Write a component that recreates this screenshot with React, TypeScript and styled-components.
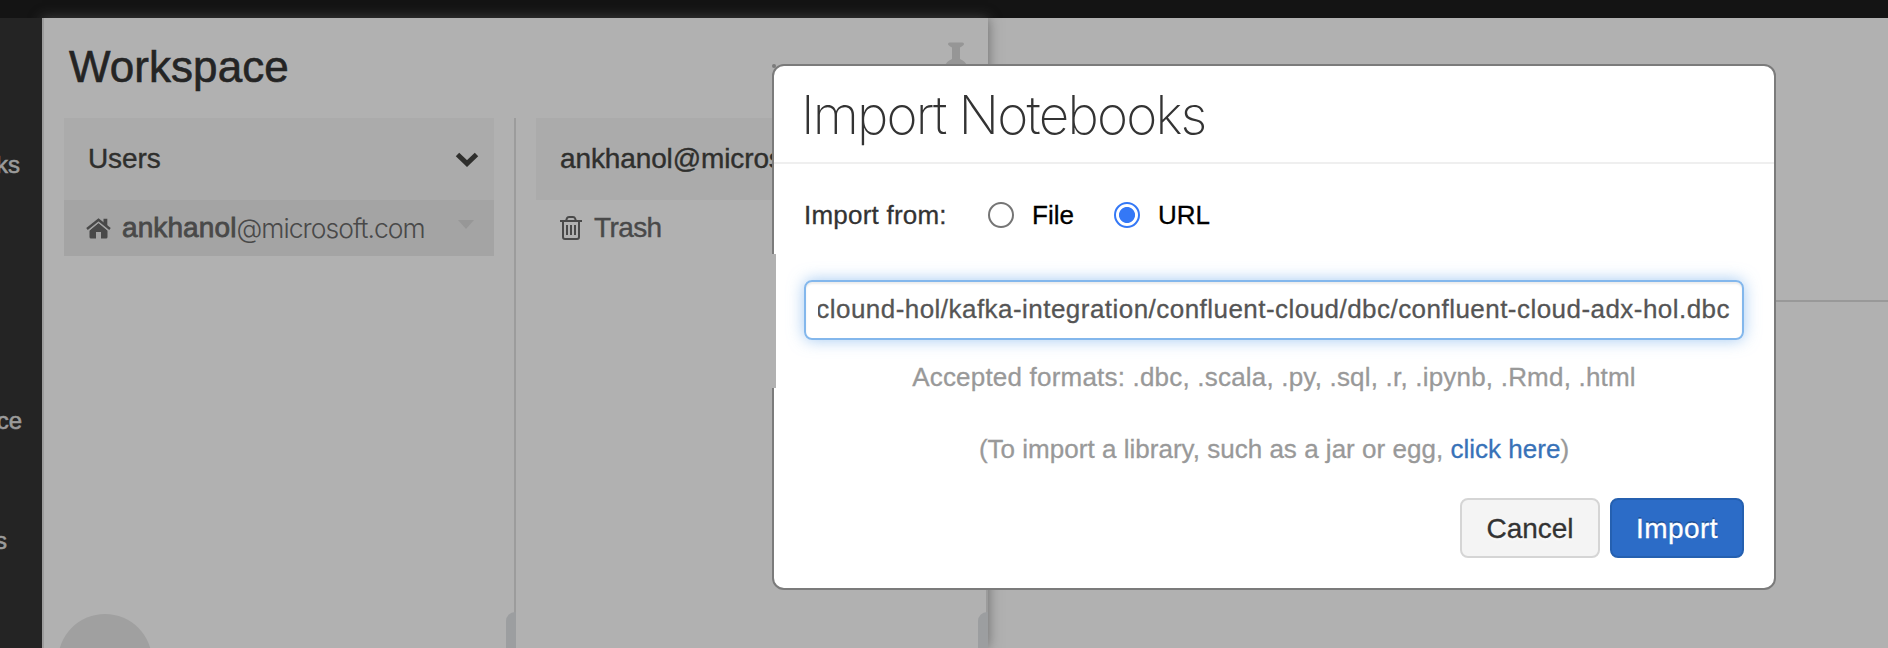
import React from "react";
import styled, { createGlobalStyle } from "styled-components";

const Global = createGlobalStyle`
  * { box-sizing: border-box; }
  html, body { margin: 0; padding: 0; }
  body {
    width: 1888px; height: 648px; overflow: hidden; background: #b1b1b1;
    font-family: "Liberation Sans", Arial, sans-serif; color: #333;
  }
`;

const Page = styled.div`
  position: relative; width: 1888px; height: 648px; overflow: hidden;
  display: flex; flex-direction: column;
`;
const TopBar = styled.header`height: 18px; flex: none; background: #141414;`;
const Body = styled.div`flex: 1; display: flex; min-height: 0;`;

const Sidebar = styled.nav`
  width: 42px; flex: none; background: #242424; color: #9b9b9b;
  display: flex; flex-direction: column; padding-top: 133px;
  position: relative; z-index: 2;
`;
const SideLabel = styled.span<{ $end: number; $gap: number }>`
  height: 28px; line-height: 28px; font-size: 24px; width: ${p => p.$end}px;
  margin-bottom: ${p => p.$gap}px; overflow: hidden;
  display: flex; justify-content: flex-end; -webkit-text-stroke: 0.6px;
`;

const Panel = styled.section`
  width: 946px; flex: none; background: #b1b1b1; border-left: 2px solid #9c9c9c;
  box-shadow: 0 0 12px rgba(80, 80, 80, 0.75);
  display: flex; flex-direction: column; position: relative; z-index: 1;
`;
const PanelHead = styled.div`
  height: 100px; flex: none; display: flex; justify-content: space-between;
  padding: 24px 20px 0 25px;
`;
const PanelTitle = styled.h1`
  margin: 0; font-size: 44px; line-height: 50px; font-weight: 400; color: #242424;
  letter-spacing: 0.05px; -webkit-text-stroke: 0.6px;
`;
const Columns = styled.div`flex: 1; display: flex; padding-left: 20px;`;
const Column = styled.div<{ $width: number; $pad: number; $line?: boolean }>`
  width: ${p => p.$width}px; padding-right: ${p => p.$pad}px; position: relative;
  margin-right: ${p => (p.$line ? 20 : 0)}px; border-right: 2px solid #9c9c9c;
`;
const ColumnHead = styled.div`
  height: 82px; background: #ababab; padding: 0 15px 1px 24px;
  display: flex; align-items: center; justify-content: space-between;
  font-size: 28px; color: #2f2f2d; letter-spacing: -0.12px; -webkit-text-stroke: 0.4px;
`;
const Row = styled.div<{ $selected?: boolean }>`
  height: 56px; padding: 0 20px 0 ${p => (p.$selected ? 22 : 24)}px;
  display: flex; align-items: center;
  background: ${p => (p.$selected ? "#a4a4a4" : "transparent")};
  font-size: 28px; color: #494949;
`;
const RowText = styled.span<{ $gap: number; $bold?: boolean }>`
  margin-left: ${p => p.$gap}px;
  -webkit-text-stroke: ${p => (p.$bold ? 0.8 : 0.4)}px;
  letter-spacing: ${p => (p.$bold ? 0.1 : -0.6)}px;
`;
const Domain = styled.span`
  font-family: Inter, sans-serif; font-weight: 300; font-size: 26.5px;
  letter-spacing: -0.95px; flex: 1;
`;
const Grip = styled.div`
  position: absolute; right: -2px; bottom: 0; width: 10px; height: 36px;
  background: #9c9ea0; border-radius: 9px 0 0 0;
`;
const Bubble = styled.div`
  position: absolute; left: 14px; top: 596px; width: 94px; height: 94px;
  border-radius: 50%; background: #a0a0a0;
`;

const Content = styled.main`flex: 1; padding-top: 282px;`;
const Rule = styled.div`height: 2px; background: #999;`;

const Dialog = styled.div`
  position: absolute; left: 772px; top: 64px; width: 1004px; height: 526px; z-index: 5;
  background: #fff; border: 2px solid #7b7b7b; border-radius: 12px;
`;
const DialogHead = styled.div`
  height: 98px; border-bottom: 2px solid #efefef; padding: 17px 0 0 27px;
`;
const DialogTitle = styled.h2`
  margin: 0; font-family: Inter, sans-serif; font-weight: 200; font-size: 53px;
  line-height: 64px; letter-spacing: -1.8px; color: #333; white-space: nowrap;
`;
const EdgeGap = styled.div`
  position: absolute; left: -2px; top: 188px; width: 4px; height: 134px; background: #b1b1b1;
`;
const CornerHandle = styled.div`
  position: absolute; left: -2px; top: -2px; width: 4px; height: 4px;
  border-radius: 50%; background: #7b7b7b;
`;
const DialogBody = styled.div`padding: 0 30px; font-size: 26px; -webkit-text-stroke: 0.3px;`;
const Options = styled.div`
  height: 102px; display: flex; align-items: center; color: #333;
`;
const Legend = styled.span`width: 184px; letter-spacing: 0.22px;`;
const Option = styled.label<{ $width: number }>`
  width: ${p => p.$width}px; display: flex; align-items: center; gap: 18px; color: #000;
`;
const Radio = styled.span<{ $on?: boolean }>`
  width: 26px; height: 26px; border-radius: 50%; flex: none;
  border: 2px solid ${p => (p.$on ? "#3478f6" : "#757575")};
  background: ${p => (p.$on ? "radial-gradient(circle, #3478f6 7.6px, #fff 8.4px)" : "#fff")};
`;
const UrlField = styled.div`
  margin-top: 14px; height: 60px; border: 2px solid #83b7ec; border-radius: 8px;
  padding: 0 12px; box-shadow: 0 0 16px rgba(102, 165, 233, 0.6), inset 0 2px 2px rgba(0, 0, 0, 0.08);
  color: #555;
`;
const UrlText = styled.div`
  height: 56px; line-height: 54px; overflow: hidden; white-space: nowrap;
  display: flex; justify-content: flex-end; letter-spacing: 0.46px;
`;
const Hint = styled.p<{ $top: number; $track?: number }>`
  margin: ${p => p.$top}px 0 0; line-height: 30px; text-align: center; color: #999;
  white-space: nowrap; letter-spacing: ${p => p.$track ?? 0}px;
`;
const Link = styled.a`color: #3872b8;`;
const Actions = styled.div`
  margin-top: 34px; display: flex; justify-content: flex-end; gap: 10px;
`;
const Button = styled.button<{ $primary?: boolean }>`
  width: ${p => (p.$primary ? 134 : 140)}px; height: 60px; padding: 1px 0 0;
  border: 2px solid ${p => (p.$primary ? "#2560b0" : "#d5d5d5")}; border-radius: 8px;
  background: ${p => (p.$primary ? "#2c6cc7" : "#f4f4f4")};
  color: ${p => (p.$primary ? "#fff" : "#333")};
  font: 28px "Liberation Sans", Arial, sans-serif; -webkit-text-stroke: 0.3px;
  letter-spacing: ${p => (p.$primary ? 0.4 : 0)}px;
  text-shadow: ${p => (p.$primary ? "0 -2px 0 rgba(0,0,0,0.25)" : "0 2px 2px rgba(255,255,255,0.75)")};
`;

const Chevron = () => (
  <svg width="24" height="16" viewBox="0 0 24 16">
    <path d="M2.5 3.5 L12 12.5 L21.5 3.5" fill="none" stroke="#2f2f2d" strokeWidth="5" />
  </svg>
);
const Home = () => (
  <svg width="25" height="21" viewBox="0 0 25 21" fill="#494949">
    <path d="M12.5 5 L21.5 12.5 V19 Q21.5 20.5 20 20.5 H15 V14 H10 V20.5 H5 Q3.5 20.5 3.5 19 V12.5 Z" />
    <path d="M1 11.5 L12.5 2 L24 11.5" fill="none" stroke="#a4a4a4" strokeWidth="4.5" />
    <path d="M1 11 L12.5 1.700 L24 11" fill="none" stroke="#494949" strokeWidth="2.4" />
    <path d="M17.5 .8 H21.3 V8 L17.5 5 Z" />
  </svg>
);
const Trash = () => (
  <svg width="22" height="24" viewBox="0 0 22 24" fill="none" stroke="#494949" strokeWidth="2">
    <path d="M0 5 H22 M6 5 L7 2.2 Q7.4 1 9 1 H13 Q14.6 1 15 2.2 L16 5 M3 5 V21 Q3 23 5 23 H17 Q19 23 19 21 V5 M7 9 V19 M11 9 V19 M15 9 V19" />
  </svg>
);
const Pin = () => (
  <svg width="24" height="40" viewBox="0 0 24 40" fill="#969696">
    <path d="M5.5 .5 H18.5 Q20 .8 20 2 Q20 3.2 16 5.5 V17 Q22 19.5 23 24 H1 Q2 19.5 8 17 V5.5 Q4 3.2 4 2 Q4 .8 5.5 .5 Z M11 24 H13 L12 38 Z" />
  </svg>
);

export default function App() {
  return (
    <Page>
      <Global />
      <TopBar />
      <Body>
        <Sidebar>
          <SideLabel $end={20} $gap={228}>ks</SideLabel>
          <SideLabel $end={22} $gap={92}>ce</SideLabel>
          <SideLabel $end={7} $gap={0}>s</SideLabel>
        </Sidebar>
        <Panel>
          <PanelHead>
            <PanelTitle>Workspace</PanelTitle>
            <Pin />
          </PanelHead>
          <Columns>
            <Column $width={452} $pad={20} $line>
              <ColumnHead>Users<Chevron /></ColumnHead>
              <Row $selected>
                <Home />
                <RowText $gap={11} $bold>ankhanol</RowText>
                <Domain>@microsoft.com</Domain>
                <svg width="16" height="17" viewBox="0 0 16 17"><path d="M0 0H16L8 9Z" fill="#979797" /></svg>
              </Row>
              <Grip />
            </Column>
            <Column $width={452} $pad={0}>
              <ColumnHead>ankhanol@microsoft.com</ColumnHead>
              <Row>
                <Trash />
                <RowText $gap={12}>Trash</RowText>
              </Row>
              <Grip />
            </Column>
          </Columns>
          <Bubble />
        </Panel>
        <Content><Rule /></Content>
      </Body>
      <Dialog>
        <DialogHead><DialogTitle>Import Notebooks</DialogTitle></DialogHead>
        <DialogBody>
          <Options>
            <Legend>Import from:</Legend>
            <Option $width={126}><Radio />File</Option>
            <Option $width={120}><Radio $on />URL</Option>
          </Options>
          <UrlField>
            <UrlText><span>clound-hol/kafka-integration/confluent-cloud/dbc/confluent-cloud-adx-hol.dbc</span></UrlText>
          </UrlField>
          <Hint $top={22} $track={0.2}>Accepted formats: .dbc, .scala, .py, .sql, .r, .ipynb, .Rmd, .html</Hint>
          <Hint $top={42} $track={0.02}>(To import a library, such as a jar or egg, <Link>click here</Link>)</Hint>
          <Actions>
            <Button>Cancel</Button>
            <Button $primary>Import</Button>
          </Actions>
        </DialogBody>
        <EdgeGap />
        <CornerHandle />
      </Dialog>
    </Page>
  );
}
